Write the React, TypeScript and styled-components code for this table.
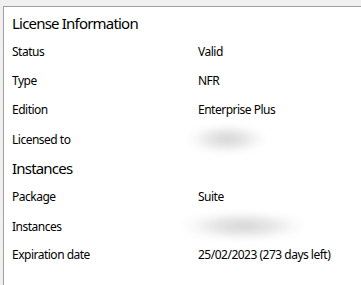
import React from "react";
import styled, { createGlobalStyle } from "styled-components";

const GlobalStyle = createGlobalStyle`
  html, body {
    margin: 0;
    padding: 0;
    background: #f0f0f0;
  }
  body {
    font-family: "Noto Sans", "Open Sans", sans-serif;
    color: #000;
  }
`;

const Frame = styled.div`
  padding-top: 6px;
  padding-left: 3px;
  height: 285px;
  box-sizing: border-box;
  overflow: hidden;
`;

const Panel = styled.div`
  background: #fff;
  border-top: 1px solid #a0a0a0;
  border-left: 1px solid #a0a0a0;
  height: 100%;
  padding: 1px 0 0 8px;
  box-sizing: border-box;
`;

const Heading = styled.div`
  height: 29px;
  display: flex;
  align-items: center;
  font-size: 15px;
  letter-spacing: -0.8px;
`;

const Row = styled.div`
  height: 29px;
  display: grid;
  grid-template-columns: 186px 1fr;
  align-items: center;
  font-size: 12px;
  letter-spacing: -0.5px;
`;

const Value = styled.span`
  white-space: nowrap;
`;

const Redacted = styled.span<{ $w: number; $dx: number }>`
  display: block;
  width: ${(p) => p.$w}px;
  height: 30px;
  margin-left: ${(p) => p.$dx}px;
  background: radial-gradient(
    ellipse at center,
    rgba(214, 214, 214, 1) 0%,
    rgba(228, 228, 228, 0.85) 35%,
    rgba(245, 245, 245, 0.5) 60%,
    rgba(255, 255, 255, 0) 80%
  );
  filter: blur(2px);
`;

type Field = { label: string; value?: string; hidden?: { w: number; dx: number } };

const license: Field[] = [
  { label: "Status", value: "Valid" },
  { label: "Type", value: "NFR" },
  { label: "Edition", value: "Enterprise Plus" },
  { label: "Licensed to", hidden: { w: 78, dx: -10 } },
];

const instances: Field[] = [
  { label: "Package", value: "Suite" },
  { label: "Instances", hidden: { w: 122, dx: -16 } },
  { label: "Expiration date", value: "25/02/2023 (273 days left)" },
];

const Fields: React.FC<{ items: Field[] }> = ({ items }) => (
  <>
    {items.map((f) => (
      <Row key={f.label}>
        <span>{f.label}</span>
        {f.hidden ? (
          <Redacted $w={f.hidden.w} $dx={f.hidden.dx} />
        ) : (
          <Value>{f.value}</Value>
        )}
      </Row>
    ))}
  </>
);

export default function App() {
  return (
    <>
      <GlobalStyle />
      <Frame>
        <Panel>
          <Heading>License Information</Heading>
          <Fields items={license} />
          <Heading>Instances</Heading>
          <Fields items={instances} />
        </Panel>
      </Frame>
    </>
  );
}
